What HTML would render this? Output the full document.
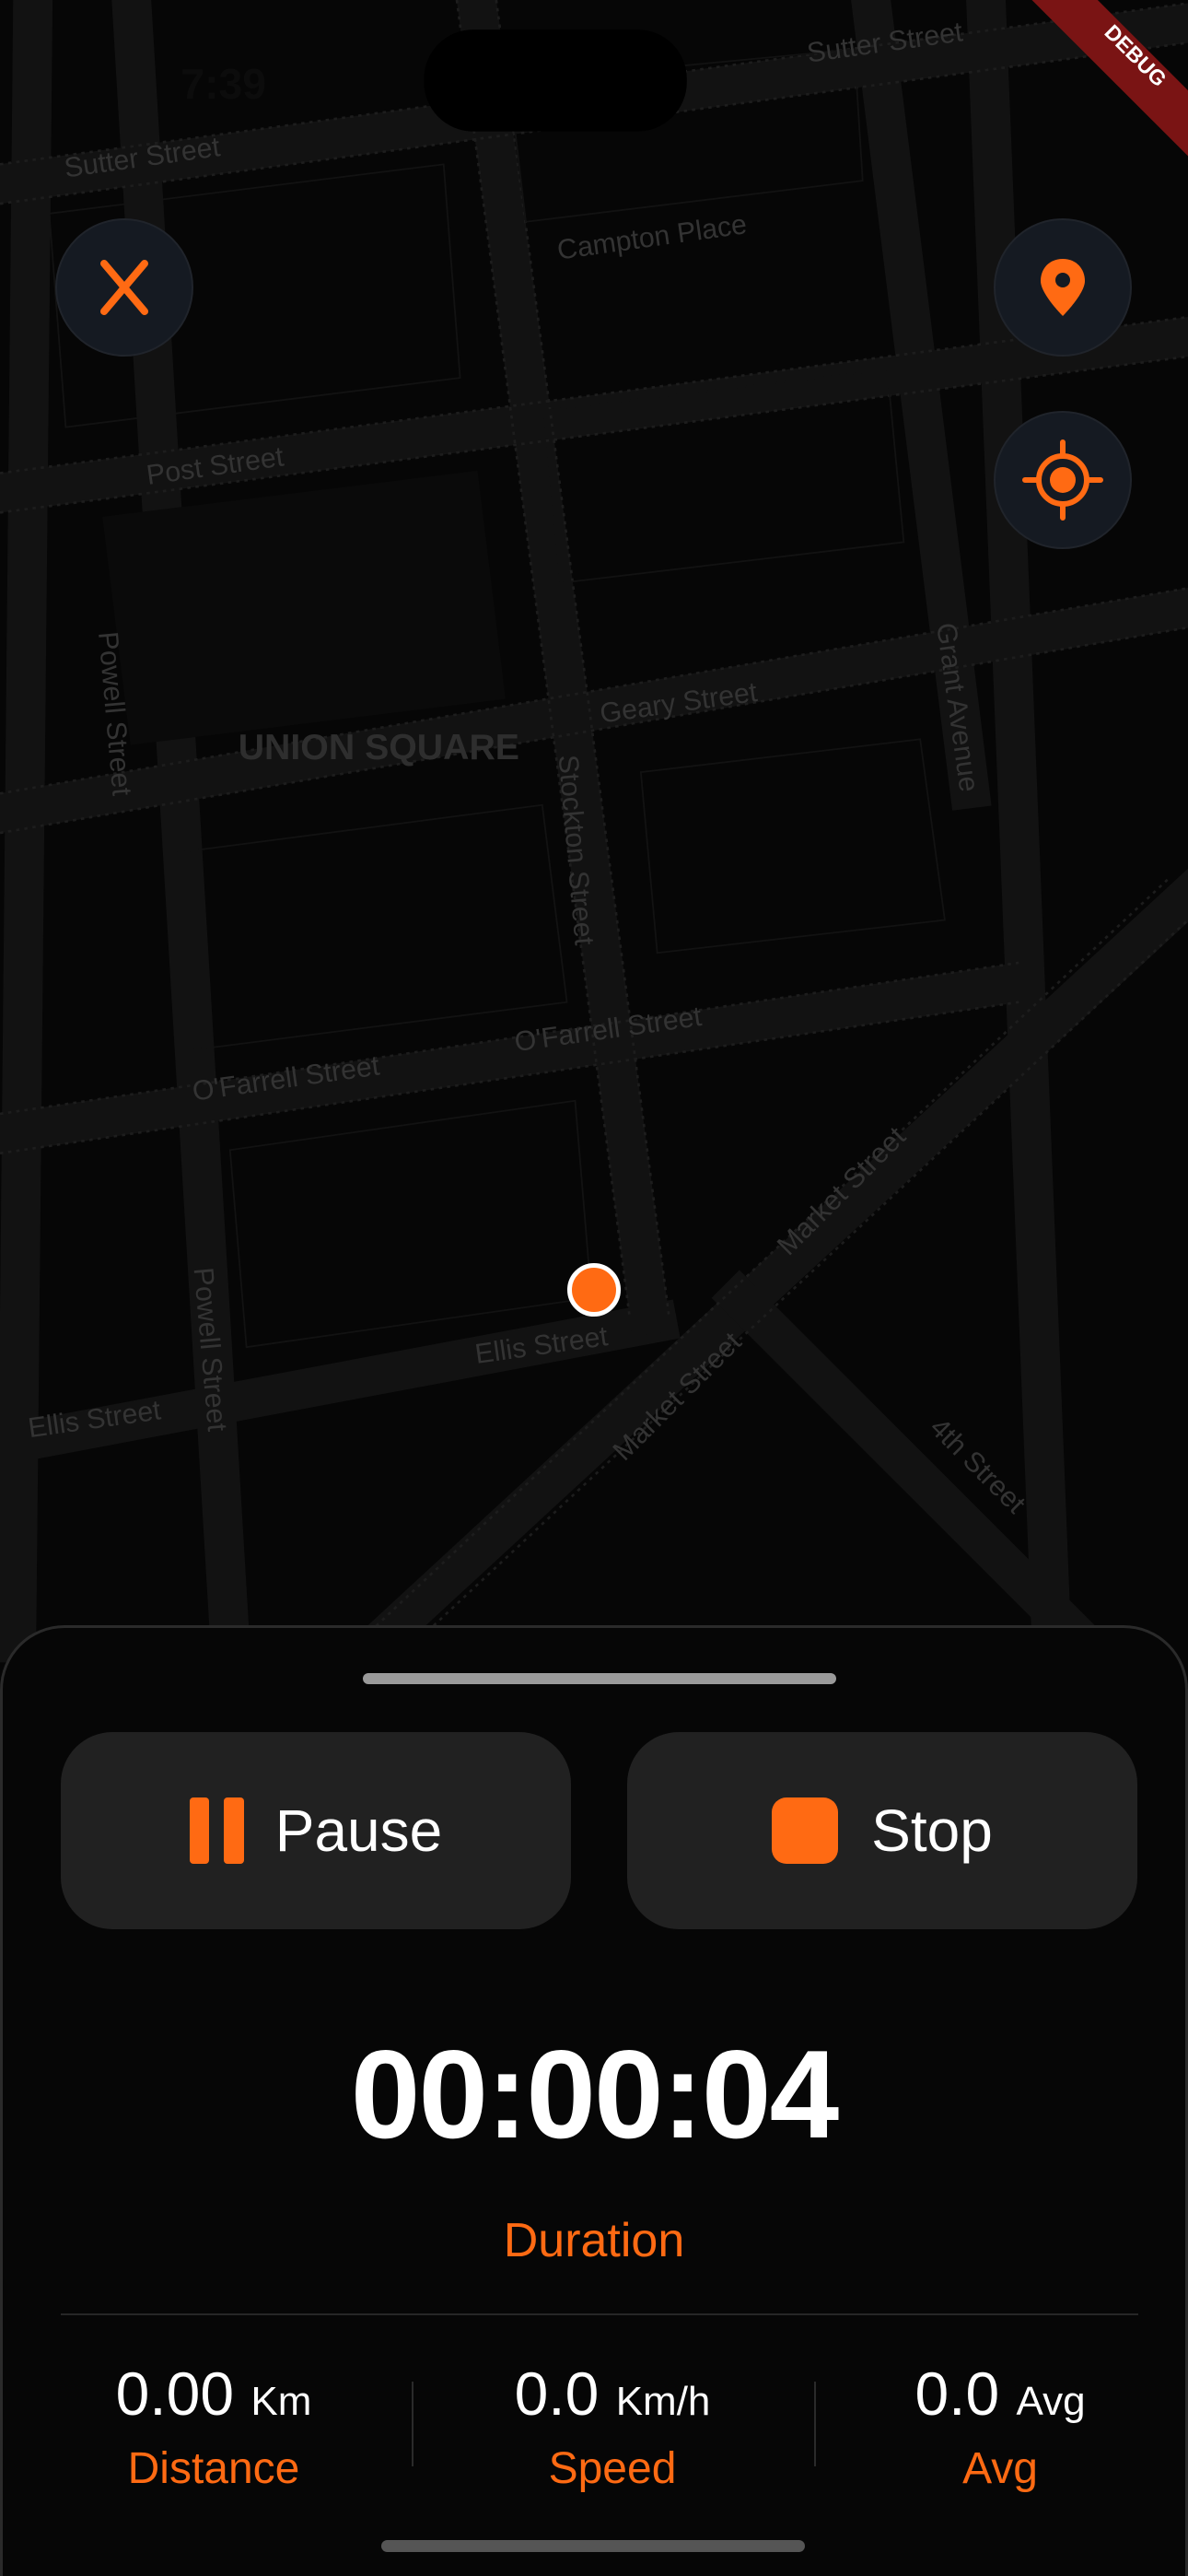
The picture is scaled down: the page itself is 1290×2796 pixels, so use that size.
<!DOCTYPE html>
<html><head><meta charset="utf-8"><style>
*{margin:0;padding:0;box-sizing:border-box}
html,body{width:1290px;height:2796px;background:#050505;overflow:hidden;font-family:"Liberation Sans",sans-serif;position:relative}
.map{position:absolute;left:0;top:0;width:1290px;height:2796px}
.fab{position:absolute;width:150px;height:150px;border-radius:50%;background:#151a22;border:2px solid #20242b;display:flex;align-items:center;justify-content:center}
.sheet{position:absolute;left:0;top:1764px;width:1290px;height:1040px;background:#060606;border:3px solid #2a2a2a;border-bottom:none;border-radius:70px 70px 0 0}
.handle{position:absolute;left:394px;top:1816px;width:514px;height:12px;border-radius:6px;background:#9a9a9a}
.btn{position:absolute;top:1880px;width:554px;height:214px;border-radius:56px;background:#212121;display:flex;align-items:center;justify-content:center;color:#fff;font-size:64px}
.or{color:#ff6a13}
.timer{position:absolute;left:0;width:1290px;top:2195px;text-align:center;color:#fff;font-size:136px;font-weight:bold;letter-spacing:-2px}
.dur{position:absolute;left:0;width:1290px;top:2402px;text-align:center;font-size:52px}
.div{position:absolute;left:66px;width:1170px;top:2511px;height:2px;background:#262626}
.stat{position:absolute;top:2560px;width:430px;text-align:center}
.val{color:#fff;font-size:66px;line-height:76px}
.val span{font-size:44px}
.lab{font-size:48px;line-height:66px;margin-top:2px}
.vd{position:absolute;top:2585px;width:2px;height:92px;background:#2a2a2a}
.home{position:absolute;left:414px;top:2757px;width:460px;height:13px;border-radius:7px;background:#555}
</style></head><body>
<svg class="map" viewBox="0 0 723 1568" preserveAspectRatio="none">
<rect width="723" height="1568" fill="#060606"/>
<g stroke="#121212" stroke-width="24" fill="none" stroke-linecap="square">
<path d="M0 112 L723 14"/>
<path d="M0 300 L723 205"/>
<path d="M0 495 L723 370"/>
<path d="M0 690 L620 598"/>
<path d="M0 880 L400 805"/>
<path d="M80 0 L140 1000"/>
<path d="M20 0 L10 1000"/>
<path d="M290 0 L395 800"/>
<path d="M530 0 L590 480"/>
<path d="M230 1000 L723 545"/>
<path d="M450 790 L650 990"/>
<path d="M600 0 L640 1000"/>
</g>
<g stroke="#1d1d1d" stroke-width="1.5" fill="none" stroke-dasharray="2 3">
<path d="M0 100 L723 2"/><path d="M0 124 L723 26"/>
<path d="M0 288 L723 193"/><path d="M0 312 L723 217"/>
<path d="M0 483 L723 358"/><path d="M0 507 L723 382"/>
<path d="M0 678 L620 586"/><path d="M0 702 L620 610"/>
<path d="M278 0 L383 800"/><path d="M302 0 L407 800"/>
<path d="M218 1000 L711 535"/><path d="M242 1010 L723 560"/>
</g>
<g stroke="#121212" stroke-width="1" fill="none">
<path d="M100 520 L330 490 L345 610 L110 640Z"/><path d="M140 700 L350 670 L360 790 L150 820Z"/>
<path d="M330 250 L540 225 L550 330 L340 355Z"/><path d="M390 470 L560 450 L575 560 L400 580Z"/>
<path d="M30 130 L270 100 L280 230 L40 260Z"/><path d="M310 50 L520 30 L525 110 L320 135Z"/>
</g>
<rect x="70" y="300" width="230" height="140" fill="#0a0a0a" transform="rotate(-7 185 370)"/>
<g fill="#333" font-family="Liberation Sans,sans-serif" font-size="17">
<text x="40" y="108" transform="rotate(-8 40 108)">Sutter Street</text>
<text x="492" y="38" transform="rotate(-8 492 38)">Sutter Street</text>
<text x="340" y="158" transform="rotate(-8 340 158)">Campton Place</text>
<text x="90" y="295" transform="rotate(-8 90 295)">Post Street</text>
<text x="366" y="440" transform="rotate(-8 366 440)">Geary Street</text>
<text x="145" y="462" font-weight="bold" font-size="22" fill="#2e2e2e">UNION SQUARE</text>
<text x="118" y="670" transform="rotate(-8 118 670)">O'Farrell Street</text>
<text x="314" y="640" transform="rotate(-8 314 640)">O'Farrell Street</text>
<text x="290" y="830" transform="rotate(-8 290 830)">Ellis Street</text>
<text x="18" y="875" transform="rotate(-8 18 875)">Ellis Street</text>
<text x="480" y="765" transform="rotate(-45 480 765)">Market Street</text>
<text x="380" y="890" transform="rotate(-45 380 890)">Market Street</text>
<text x="565" y="870" transform="rotate(45 565 870)">4th Street</text>
<text x="340" y="460" transform="rotate(85 340 460)">Stockton Street</text>
<text x="60" y="385" transform="rotate(85 60 385)">Powell Street</text>
<text x="118" y="772" transform="rotate(85 118 772)">Powell Street</text>
<text x="570" y="380" transform="rotate(82 570 380)">Grant Avenue</text>
</g>
<text x="110" y="60" fill="#0c0c0c" font-size="26" font-weight="bold" font-family="Liberation Sans,sans-serif">7:39</text>
<rect x="258" y="18" width="160" height="62" rx="30" fill="#000"/>
<path d="M628 0 L668 0 L723 55 L723 95Z" fill="#7a1414"/>
<text x="688" y="37" fill="#fff" font-size="13" font-weight="bold" font-family="Liberation Sans,sans-serif" text-anchor="middle" transform="rotate(45 688 37)">DEBUG</text>
</svg>

<div class="fab" style="left:60px;top:237px"><svg width="80" height="80" viewBox="0 0 80 80"><path d="M18 14 L62 66 M62 14 L18 66" stroke="#ff6a13" stroke-width="8" stroke-linecap="round"/></svg></div>
<div class="fab" style="left:1079px;top:237px"><svg width="60" height="70" viewBox="0 0 60 70"><path d="M30 4 C15 4 6 15 6 28 C6 42 30 66 30 66 C30 66 54 42 54 28 C54 15 45 4 30 4Z" fill="#ff6a13"/><circle cx="30" cy="27" r="8" fill="#151a22"/></svg></div>
<div class="fab" style="left:1079px;top:446px"><svg width="90" height="90" viewBox="0 0 90 90"><circle cx="45" cy="45" r="26" fill="none" stroke="#ff6a13" stroke-width="6"/><circle cx="45" cy="45" r="14" fill="#ff6a13"/><path d="M45 4V19M45 71V86M4 45H19M71 45H86" stroke="#ff6a13" stroke-width="6" stroke-linecap="round"/></svg></div>

<div style="position:absolute;left:616px;top:1371px;width:58px;height:58px;border-radius:50%;background:#ff6a13;border:5px solid #fff"></div>

<div class="sheet"></div>
<div class="handle"></div>
<div class="btn" style="left:66px"><span style="display:inline-block;width:21px;height:72px;background:#ff6a13;border-radius:4px;margin-right:16px"></span><span style="display:inline-block;width:22px;height:72px;background:#ff6a13;border-radius:4px;margin-right:34px"></span>Pause</div>
<div class="btn" style="left:681px"><span style="display:inline-block;width:72px;height:72px;background:#ff6a13;border-radius:16px;margin-right:36px"></span>Stop</div>
<div class="timer">00:00:04</div>
<div class="dur or">Duration</div>
<div class="div"></div>
<div class="stat" style="left:17px"><div class="val">0.00 <span>Km</span></div><div class="lab or">Distance</div></div>
<div class="vd" style="left:447px"></div>
<div class="stat" style="left:450px"><div class="val">0.0 <span>Km/h</span></div><div class="lab or">Speed</div></div>
<div class="vd" style="left:884px"></div>
<div class="stat" style="left:871px"><div class="val">0.0 <span>Avg</span></div><div class="lab or">Avg</div></div>
<div class="home"></div>
</body></html>
